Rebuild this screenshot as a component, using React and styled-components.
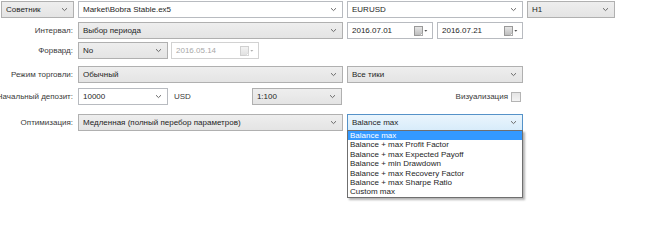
import React from "react";
import styled, { createGlobalStyle, css } from "styled-components";

const GlobalStyle = createGlobalStyle`
  html, body { margin: 0; padding: 0; background: #ffffff; }
  body { font-family: "Liberation Sans", Arial, sans-serif; font-size: 8px; color: #222; overflow: hidden; }
`;

const Form = styled.div`
  width: 650px;
  height: 246px;
  display: flex;
  flex-direction: column;
`;

const Row = styled.div`
  display: grid;
  grid-template-columns: 74px 265px 176px 88px;
  column-gap: 4px;
  height: 17px;
  margin-top: ${(p) => p.$top}px;
`;

const Label = styled.div`
  display: flex;
  justify-content: flex-end;
  align-items: center;
  white-space: nowrap;
  color: #3a3a3a;
  padding-right: 1px;
  min-width: 0;
`;

const Cell = styled.div`
  display: flex;
  align-items: center;
  gap: ${(p) => p.$gap ?? 4}px;
  min-width: 0;
  position: relative;
`;

const Box = styled.div`
  box-sizing: border-box;
  height: 17px;
  display: flex;
  align-items: center;
  padding: 0 4px 0 4px;
  white-space: nowrap;
  overflow: hidden;
  flex: ${(p) => (p.$w ? `0 0 ${p.$w}px` : "1 1 0")};
  margin-left: ${(p) => p.$ml ?? 0}px;
  ${(p) =>
    p.$variant === "gray" &&
    css`
      border: 1px solid #b0b0b0;
      background: linear-gradient(#eeeeee, #e4e4e4);
      color: #1e1e1e;
    `}
  ${(p) =>
    p.$variant === "white" &&
    css`
      border: 1px solid #b8bbc0;
      background: #ffffff;
      color: #1e1e1e;
    `}
  ${(p) =>
    p.$variant === "blue" &&
    css`
      border: 1px solid #5592c8;
      background: linear-gradient(#eaf5fd, #d8ecfa);
      color: #1e1e1e;
    `}
  ${(p) =>
    p.$variant === "disabled" &&
    css`
      border: 1px solid #d2d2d2;
      background: #ffffff;
      color: #a8a8a8;
    `}
`;

const BoxText = styled.span`
  flex: 1 1 auto;
  overflow: hidden;
`;

const Plain = styled.span`
  color: #3a3a3a;
  white-space: nowrap;
  margin-left: ${(p) => p.$ml ?? 0}px;
`;

const Chevron = () => (
  <svg width="7" height="5" viewBox="0 0 7 5" style={{ flex: "0 0 auto", marginRight: 1 }}>
    <path d="M1 1.2 L3.5 3.6 L6 1.2" fill="none" stroke="#6a6a6a" strokeWidth="1" />
  </svg>
);

const Calendar = ({ disabled }) => (
  <svg width="14" height="10" viewBox="0 0 14 10" style={{ flex: "0 0 auto", opacity: disabled ? 0.45 : 1 }}>
    <defs>
      <linearGradient id="cal" x1="0" y1="0" x2="0" y2="1">
        <stop offset="0" stopColor="#e8e8e8" />
        <stop offset="1" stopColor="#bcbcbc" />
      </linearGradient>
    </defs>
    <rect x="0.5" y="0.5" width="8" height="9" fill="url(#cal)" stroke="#999" />
    <path d="M5.5 9.5 L8.5 6.5 L8.5 9.5 Z" fill="#ffffff" stroke="#999" strokeWidth="0.6" />
    <path d="M10.3 4 L13.3 4 L11.8 5.7 Z" fill="#555" />
  </svg>
);

const Combo = ({ variant = "gray", w, ml, children }) => (
  <Box $variant={variant} $w={w} $ml={ml}>
    <BoxText>{children}</BoxText>
    <Chevron />
  </Box>
);

const DateBox = ({ disabled, w, children }) => (
  <Box $variant={disabled ? "disabled" : "white"} $w={w}>
    <BoxText>{children}</BoxText>
    <Calendar disabled={disabled} />
  </Box>
);

const Right = styled.div`
  display: flex;
  align-items: center;
  justify-content: flex-end;
  flex: 1 1 auto;
  gap: 3px;
  padding-right: 2px;
`;

const Checkbox = styled.span`
  box-sizing: border-box;
  width: 10px;
  height: 10px;
  border: 1px solid #b4b4b4;
  background: linear-gradient(#e4e4e4, #f4f4f4);
`;

const DropList = styled.ul`
  position: absolute;
  left: 0;
  top: 16px;
  width: 176px;
  box-sizing: border-box;
  margin: 0;
  padding: 0;
  list-style: none;
  border: 1px solid #6f6f6f;
  background: #ffffff;
  box-shadow: 2px 2px 2px rgba(0, 0, 0, 0.3);
  z-index: 2;
`;

const DropItem = styled.li`
  height: 9.4px;
  line-height: 9.4px;
  padding-left: 2px;
  white-space: nowrap;
  color: ${(p) => (p.$active ? "#ffffff" : "#1e1e1e")};
  background: ${(p) => (p.$active ? "#3399ff" : "transparent")};
`;

const criteria = [
  "Balance max",
  "Balance + max Profit Factor",
  "Balance + max Expected Payoff",
  "Balance + min Drawdown",
  "Balance + max Recovery Factor",
  "Balance + max Sharpe Ratio",
  "Custom max",
];

export default function App() {
  return (
    <>
      <GlobalStyle />
      <Form>
        <Row $top={1}>
          <Cell>
            <Combo w={73} ml={1}>Советник</Combo>
          </Cell>
          <Cell>
            <Combo variant="white">Market\Bobra Stable.ex5</Combo>
          </Cell>
          <Cell>
            <Combo variant="white">EURUSD</Combo>
          </Cell>
          <Cell>
            <Combo>H1</Combo>
          </Cell>
        </Row>

        <Row $top={4}>
          <Label>Интервал:</Label>
          <Cell>
            <Combo>Выбор периода</Combo>
          </Cell>
          <Cell>
            <DateBox>2016.07.01</DateBox>
            <DateBox>2016.07.21</DateBox>
          </Cell>
        </Row>

        <Row $top={3}>
          <Label>Форвард:</Label>
          <Cell $gap={3}>
            <Combo w={90}>No</Combo>
            <DateBox disabled w={88}>2016.05.14</DateBox>
          </Cell>
        </Row>

        <Row $top={7}>
          <Label>Режим торговли:</Label>
          <Cell>
            <Combo>Обычный</Combo>
          </Cell>
          <Cell>
            <Combo>Все тики</Combo>
          </Cell>
        </Row>

        <Row $top={5}>
          <Label>Начальный депозит:</Label>
          <Cell $gap={0}>
            <Combo variant="white" w={90}>10000</Combo>
            <Plain $ml={6}>USD</Plain>
            <Combo w={90} ml={61}>1:100</Combo>
          </Cell>
          <Cell>
            <Right>
              <Plain>Визуализация</Plain>
              <Checkbox />
            </Right>
          </Cell>
        </Row>

        <Row $top={9}>
          <Label>Оптимизация:</Label>
          <Cell>
            <Combo>Медленная (полный перебор параметров)</Combo>
          </Cell>
          <Cell>
            <Combo variant="blue">Balance max</Combo>
            <DropList>
              {criteria.map((c, i) => (
                <DropItem key={c} $active={i === 0}>
                  {c}
                </DropItem>
              ))}
            </DropList>
          </Cell>
        </Row>
      </Form>
    </>
  );
}
